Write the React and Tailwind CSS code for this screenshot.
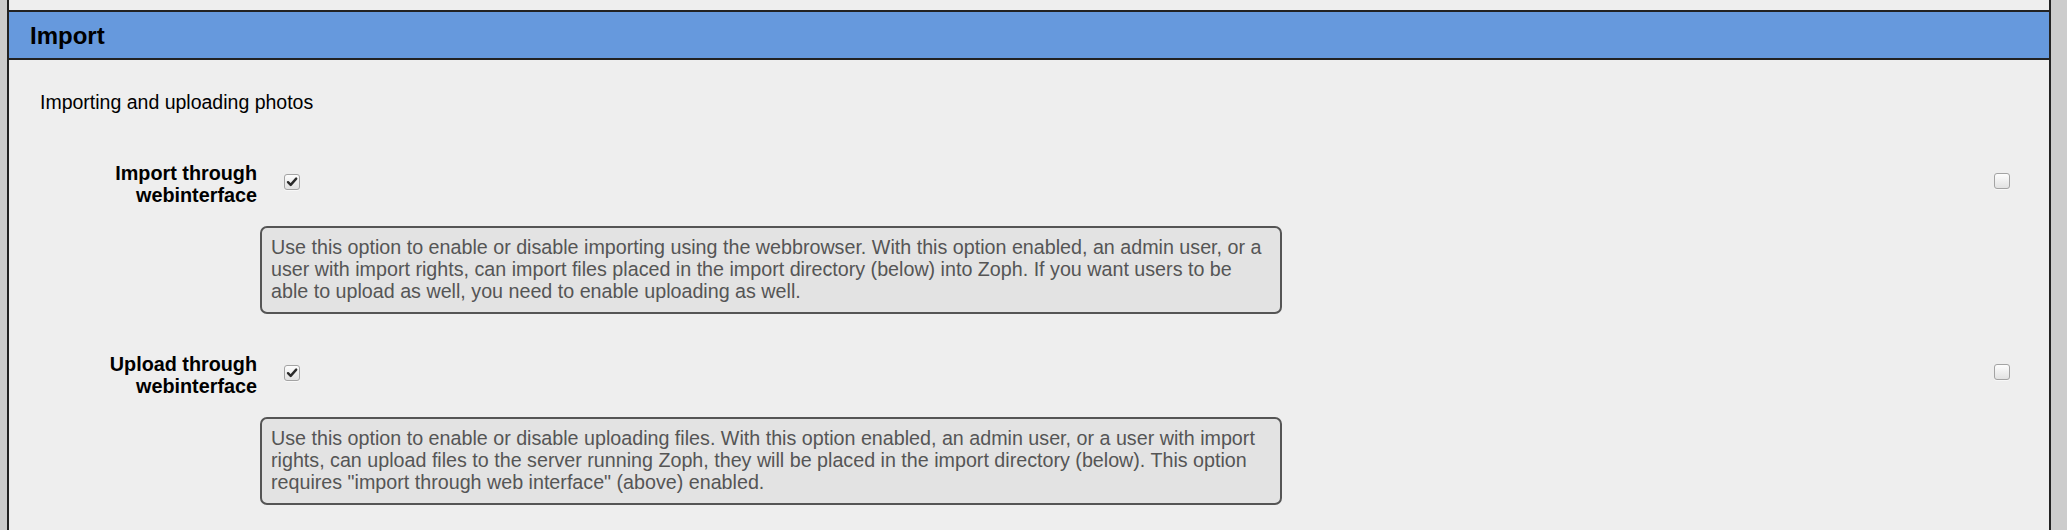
import React from "react";

function Checkbox({ checked }) {
  return (
    <span className="inline-flex h-[16px] w-[16px] shrink-0 items-center justify-center rounded-[3px] border border-[#a3a3a3] bg-gradient-to-b from-[#fdfdfd] to-[#e2e2e2] shadow-[0_1px_0_rgba(255,255,255,0.6)]">
      {checked && (
        <svg width="14" height="14" viewBox="0 0 14 14">
          <path d="M3 7.2 L5.7 9.9 L11.2 3.6" fill="none" stroke="#2b2b2b" strokeWidth="2.4" strokeLinecap="round" strokeLinejoin="round" />
        </svg>
      )}
    </span>
  );
}

function Option({ label1, label2, desc }) {
  return (
    <div className="flex flex-col">
      <div className="flex items-start">
        <div className="w-[248px] shrink-0 text-right text-[19.8px] font-bold leading-[22px] text-black">
          <div>{label1}</div>
          <div>{label2}</div>
        </div>
        <div className="ml-[27px] mt-[10px]">
          <Checkbox checked />
        </div>
        <div className="flex-1" />
        <div className="mr-[39px] mt-[10px]">
          <Checkbox />
        </div>
      </div>
      <div className="ml-[251px] mt-[20px] w-[1022px] rounded-[7px] border-2 border-[#555] bg-[#e3e3e3] px-[9px] pb-[10px] pt-[8px] text-[19.7px] leading-[22px] text-[#555]">
        {desc}
      </div>
    </div>
  );
}

export default function App() {
  return (
    <div className="flex min-h-[530px] w-full bg-[#cccccc] font-['Liberation_Sans',Arial,sans-serif]">
      <div className="w-[7px] shrink-0" />
      <div className="flex-1 border-x-2 border-[#222] bg-[#eeeeee]">
        <div className="h-[10px]" />
        <div className="flex h-[50px] items-center border-y-2 border-[#222] bg-[#6699dd] px-[21px] pt-[2px] text-[24px] font-bold text-black">
          Import
        </div>
        <div className="pl-[31px] pt-[31px] text-[19.5px] leading-[22px] text-black">
          Importing and uploading photos
        </div>
        <div className="mt-[49px] flex flex-col gap-[39px]">
          <Option
            label1="Import through"
            label2="webinterface"
            desc="Use this option to enable or disable importing using the webbrowser. With this option enabled, an admin user, or a user with import rights, can import files placed in the import directory (below) into Zoph. If you want users to be able to upload as well, you need to enable uploading as well."
          />
          <Option
            label1="Upload through"
            label2="webinterface"
            desc={'Use this option to enable or disable uploading files. With this option enabled, an admin user, or a user with import rights, can upload files to the server running Zoph, they will be placed in the import directory (below). This option requires "import through web interface" (above) enabled.'}
          />
        </div>
      </div>
      <div className="w-[16px] shrink-0" />
    </div>
  );
}
